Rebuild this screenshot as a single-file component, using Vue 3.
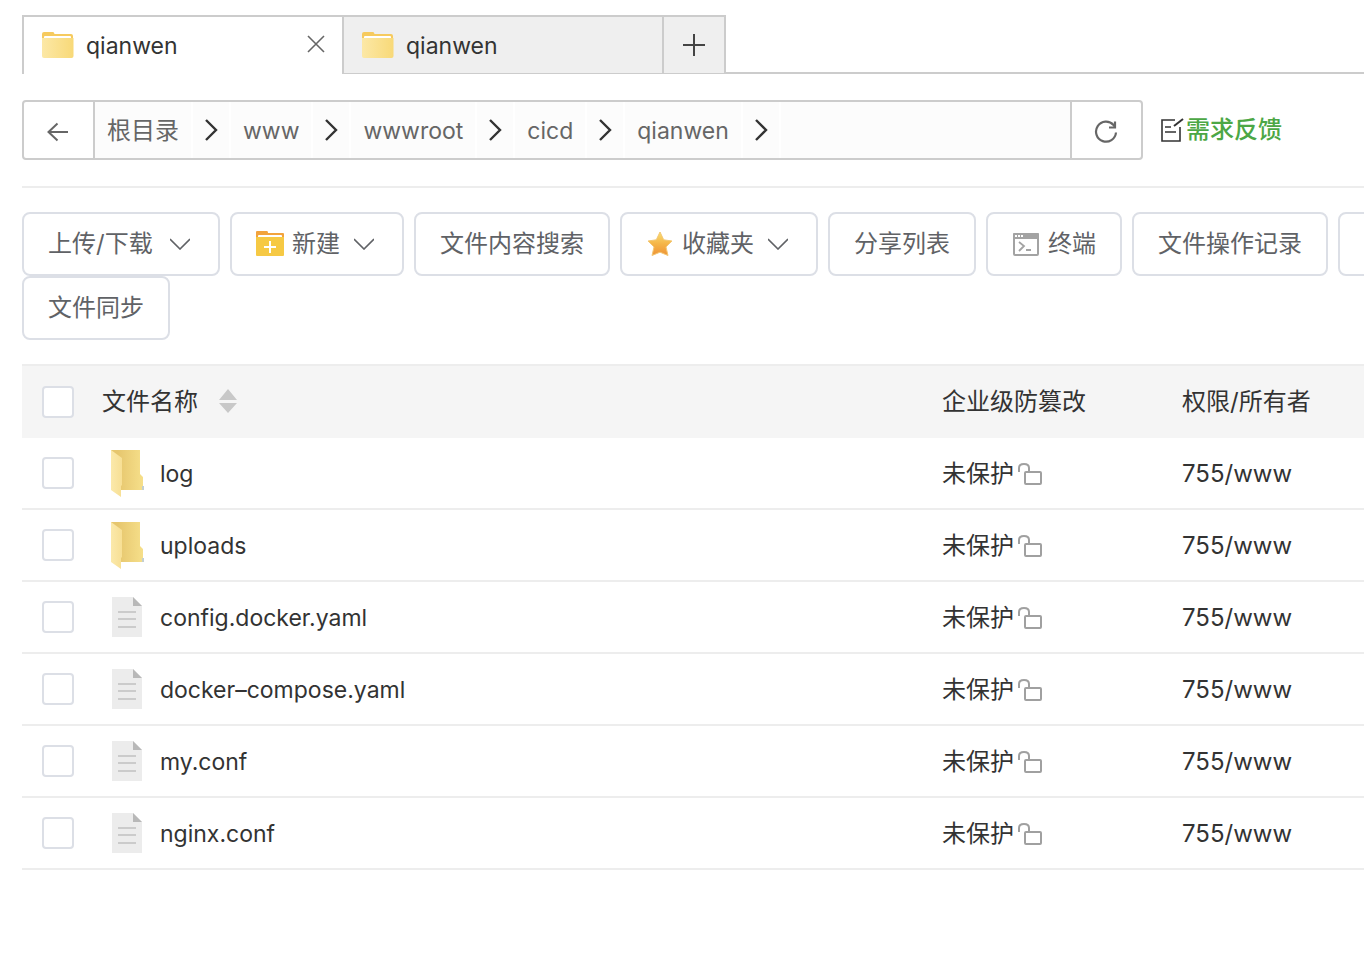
<script setup>
import { ref } from 'vue';

const tabs = ref(['qianwen', 'qianwen']);
const activeTab = ref(0);
const crumbs = ['根目录', 'www', 'wwwroot', 'cicd', 'qianwen'];

const files = ref([
  { name: 'log', type: 'folder', checked: false },
  { name: 'uploads', type: 'folder', checked: false },
  { name: 'config.docker.yaml', type: 'file', checked: false },
  { name: 'docker–compose.yaml', type: 'file', checked: false },
  { name: 'my.conf', type: 'file', checked: false },
  { name: 'nginx.conf', type: 'file', checked: false },
]);

const toolbar = [
  { text: '上传/下载', arrow: true, wide: true },
  { text: '新建', icon: 'new', arrow: true },
  { text: '文件内容搜索' },
  { text: '收藏夹', icon: 'star', arrow: true },
  { text: '分享列表' },
  { text: '终端', icon: 'terminal' },
  { text: '文件操作记录' },
];

const allChecked = ref(false);
const toggleAll = () => {
  files.value.forEach((file) => (file.checked = allChecked.value));
};
</script>

<template>
  <main class="file-manager">
    <svg class="defs" width="0" height="0" aria-hidden="true">
      <defs>
        <linearGradient id="tab-folder">
          <stop offset="0" stop-color="#fce8a6" />
          <stop offset="1" stop-color="#f8d978" />
        </linearGradient>
        <linearGradient id="folder-back">
          <stop offset="0.2" stop-color="#e6c66e" />
          <stop offset="1" stop-color="#f6df8a" />
        </linearGradient>
        <linearGradient id="folder-front">
          <stop offset="0" stop-color="#fbe9ab" />
          <stop offset="1" stop-color="#f7df94" />
        </linearGradient>
        <linearGradient id="star-fill" x1="0" y1="0" x2="0" y2="1">
          <stop offset="0" stop-color="#f9df72" />
          <stop offset="0.5" stop-color="#f5b548" />
          <stop offset="1" stop-color="#ee9336" />
        </linearGradient>
      </defs>
    </svg>

    <nav class="tabs">
      <div
        v-for="(tab, index) in tabs"
        :key="index"
        :class="['tab', { 'tab--active': index === activeTab }]">
        <button class="tab__name" @click="activeTab = index">
          <svg width="32" height="28" viewBox="0 0 32 28">
            <path d="M0 8V3q0-2 2-2h9q1 0 1.500 2H29q2 0 2 2v5H0z" fill="#f6ca5e" />
            <path d="M2 6q0-1 1-1h25q1 0 1 1v2H2z" fill="#fff" />
            <path d="M0 7h31.500v18q0 2-2 2H2q-2 0-2-2z" fill="url(#tab-folder)" />
          </svg>
          <span>{{ tab }}</span>
        </button>
        <button v-if="index === activeTab" class="tab__close" aria-label="关闭">
          <svg width="18" height="18" viewBox="0 0 18 18">
            <path d="M1 1l16 16M17 1L1 17" fill="none" stroke="#666" stroke-width="1.600" />
          </svg>
        </button>
      </div>
      <button class="tabs__add" aria-label="新标签">
        <svg width="24" height="24" viewBox="0 0 24 24">
          <path d="M12 1v22M1 12h22" fill="none" stroke="#444" stroke-width="2" />
        </svg>
      </button>
    </nav>

    <div class="location">
      <div class="path">
        <button class="path__button path__button--back" aria-label="返回">
          <svg width="22" height="20" viewBox="0 0 22 20">
            <path d="M10.500 1.500L1.500 10l9 8.500M1.500 10H21" fill="none" stroke="#666" stroke-width="2" />
          </svg>
        </button>
        <div class="path__crumbs">
          <template v-for="crumb in crumbs" :key="crumb">
            <a class="crumb" href="#">{{ crumb }}</a>
            <span class="crumb__next">
              <svg width="14" height="22" viewBox="0 0 14 22">
                <path d="M2 1l10 10L2 21" fill="none" stroke="#333" stroke-width="2.400" />
              </svg>
            </span>
          </template>
        </div>
        <button class="path__button path__button--refresh" aria-label="刷新">
          <svg width="24" height="24" viewBox="0 0 24 24">
            <path d="M22 12.500A10 10 0 1 1 19.500 5l1 1.500" fill="none" stroke="#666" stroke-width="2.200" />
            <path d="M21 1.500v6h-6" fill="none" stroke="#666" stroke-width="2.200" />
          </svg>
        </button>
      </div>
      <a class="feedback" href="#">
        <svg width="26" height="28" viewBox="0 0 26 28">
          <path d="M16 4H3v21h18V11" fill="none" stroke="#333" stroke-width="1.600" />
          <path d="M6 11h6M6 16h11" fill="none" stroke="#333" stroke-width="1.600" />
          <path d="M15 10l9-7" fill="none" stroke="#333" stroke-width="2" />
        </svg>
        <span>需求反馈</span>
      </a>
    </div>

    <div class="toolbar">
      <div class="toolbar__row">
        <button v-for="item in toolbar" :key="item.text" :class="['tool', { 'tool--wide': item.wide }]">
          <svg v-if="item.icon === 'new'" class="tool__icon" width="28" height="28" viewBox="0 0 28 28">
            <path d="M0 8V2q0-1 1-1h10q1 0 1 2h15q1 0 1 1v5H0z" fill="#f2a33c" />
            <path d="M2 6q0-1 1-1h22q1 0 1 1v2H2z" fill="#fff" />
            <path d="M0 7h28v18q0 1-1 1H1q-1 0-1-1z" fill="#f6c944" />
            <path d="M14 11v12M8 17h12" fill="none" stroke="#fff" stroke-width="2" />
          </svg>
          <svg v-else-if="item.icon === 'star'" class="tool__icon" width="28" height="28" viewBox="0 0 28 28">
            <path
              d="M14 2l3.700 7.800 8.300 1.200-6 6 2 8.500-8-3.300-8 3.300L8 17l-6-6 8.300-1.200z"
              fill="url(#star-fill)"
              stroke="#f3c774"
              stroke-width="1"
              stroke-linejoin="round" />
          </svg>
          <svg
            v-else-if="item.icon === 'terminal'"
            class="tool__icon"
            width="28"
            height="28"
            viewBox="0 0 28 28">
            <rect x="2" y="4" width="24" height="21" rx="1" fill="#fff" stroke="#a3a3a3" stroke-width="2" />
            <path d="M1 4q0-1 1-1h24q1 0 1 1v5H1z" fill="#a3a3a3" />
            <path d="M3 6h2m1 0h2m1 0h2" stroke="#fff" stroke-width="2" />
            <path d="M7 12l5 4-5 5M14 20h5" fill="none" stroke="#a3a3a3" stroke-width="1.800" />
          </svg>
          <span>{{ item.text }}</span>
          <svg v-if="item.arrow" class="tool__arrow" width="20" height="12" viewBox="0 0 20 12">
            <path d="M0 1l10 10L20 1" fill="none" stroke="#606266" stroke-width="1.600" />
          </svg>
        </button>
        <button class="tool tool--more" aria-label="更多"></button>
      </div>
      <div class="toolbar__row">
        <button class="tool">文件同步</button>
      </div>
    </div>

    <table class="files">
      <colgroup>
        <col class="files__check" />
        <col />
        <col class="files__protect" />
        <col class="files__owner" />
      </colgroup>
      <thead>
        <tr>
          <th>
            <input v-model="allChecked" type="checkbox" aria-label="全选" @change="toggleAll" />
          </th>
          <th>
            <div class="cell">
              <span>文件名称</span>
              <svg class="sort" width="18" height="26" viewBox="0 0 18 26">
                <path d="M9 0l9 11H0zM9 24l9-10H0z" fill="#c8c8c8" />
              </svg>
            </div>
          </th>
          <th>企业级防篡改</th>
          <th>权限/所有者</th>
        </tr>
      </thead>
      <tbody>
        <tr v-for="file in files" :key="file.name">
          <td>
            <input v-model="file.checked" type="checkbox" :aria-label="file.name" />
          </td>
          <td>
            <div class="cell">
              <svg v-if="file.type === 'folder'" class="file-icon" width="50" height="48" viewBox="0 0 50 48">
                <path d="M9 1h29v24l3 3v13H9z" fill="url(#folder-back)" />
                <path d="M40 37h2v4h-2z" fill="#c3cfd0" />
                <path d="M9 1l11 8v27l-1 1v11L9 41z" fill="url(#folder-front)" />
              </svg>
              <svg v-else class="file-icon" width="50" height="48" viewBox="0 0 50 48">
                <path d="M10 4h21l9 9v31H10z" fill="#ececec" />
                <path d="M31 4l9 9h-9z" fill="#b8b8b8" />
                <path d="M16 19h18M16 26h18M16 34h18" fill="none" stroke="#cbcbcb" stroke-width="2" />
              </svg>
              <span class="file-name">{{ file.name }}</span>
            </div>
          </td>
          <td>
            <div class="cell">
              <span class="protect">未保护</span>
              <svg width="28" height="26" viewBox="0 0 28 26">
                <rect x="10" y="12" width="16" height="12" rx="1" fill="none" stroke="#a0a0a0" stroke-width="2" />
                <path d="M4 12V8q0-4 5-4t5 4v4" fill="none" stroke="#a0a0a0" stroke-width="2" />
              </svg>
            </div>
          </td>
          <td class="owner">755/www</td>
        </tr>
      </tbody>
    </table>
  </main>
</template>

<style>
body {
  background: #fff;
}
</style>

<style scoped>
.file-manager {
  padding: 15px 0 24px 22px;
  overflow: hidden;
  font-family: Inter, 'Noto Sans CJK SC', sans-serif;
  font-size: 24px;
  line-height: 32px;
  color: #333;
}

.file-manager * {
  box-sizing: border-box;
}

.defs {
  position: absolute;
}

svg {
  display: block;
  flex: none;
}

button {
  padding: 0;
  border: none;
  background: none;
  color: inherit;
  font: inherit;
  cursor: pointer;
}

a {
  text-decoration: none;
}

.tabs {
  display: flex;
  height: 59px;
}

.tabs::after {
  content: '';
  flex: 1;
  border-bottom: 2px solid #ccc;
}

.tab {
  display: flex;
  align-items: center;
  width: 320px;
  padding: 0 16px 0 18px;
  border: solid #ccc;
  border-width: 2px 0 1px 2px;
  background: #efefef;
}

.tab--active {
  padding-bottom: 1px;
  border-bottom: none;
  background: #fff;
}

.tab__name {
  display: flex;
  flex: 1;
  align-items: center;
  gap: 12px;
  font-size: 23px;
}

.tab__name span {
  padding-top: 2px;
}

.tab__close {
  padding: 0 1px 2px;
}

.tabs__add {
  display: flex;
  align-items: center;
  justify-content: center;
  width: 64px;
  border: solid #ccc;
  border-width: 2px 2px 1px;
  background: #efefef;
}

.location {
  display: flex;
  align-items: center;
  gap: 16px;
  padding: 26px 0;
  border-bottom: 2px solid #ededed;
}

.path {
  display: flex;
  width: 1121px;
  height: 60px;
}

.path__button {
  display: flex;
  align-items: center;
  justify-content: center;
  width: 73px;
  padding: 4px 1px 0 0;
  border: 2px solid #ccc;
}

.path__button--back {
  border-radius: 4px 0 0 4px;
}

.path__button--refresh {
  border-radius: 0 4px 4px 0;
}

.path__crumbs {
  display: flex;
  flex: 1;
  border: solid #ccc;
  border-width: 2px 0;
  background: #fcfcfc;
}

.crumb,
.crumb__next {
  display: flex;
  align-items: center;
  border-right: 2px solid #fff;
}

.crumb {
  padding: 2px 12px 0;
  color: #666;
  font-size: 23px;
}

.crumb:first-child {
  font-size: 24px;
}

.crumb__next {
  justify-content: center;
  width: 38px;
}

.feedback {
  display: flex;
  align-items: center;
  gap: 1px;
  color: #4ca745;
  font-weight: 500;
}

.toolbar {
  padding: 24px 0;
}

.toolbar__row {
  display: flex;
  gap: 10px;
}

.tool {
  display: flex;
  flex: none;
  align-items: center;
  height: 64px;
  padding: 0 24px;
  border: 2px solid #dcdfe6;
  border-radius: 8px;
  color: #606266;
}

.tool--wide {
  min-width: 198px;
}

.tool--wide .tool__arrow {
  margin-left: auto;
}

.tool--more {
  width: 148px;
}

.tool__icon {
  margin-right: 8px;
}

.tool__arrow {
  margin: 0 4px 0 14px;
}

.files {
  width: 100%;
  border-collapse: separate;
  border-spacing: 0;
  table-layout: fixed;
}

.files__check {
  width: 60px;
}

.files__protect {
  width: 240px;
}

.files__owner {
  width: 202px;
}

th,
td {
  height: 72px;
  padding: 0 20px;
  border-bottom: 2px solid #ededed;
  font-weight: 400;
  text-align: left;
  white-space: nowrap;
}

th {
  height: 74px;
  border-top: 2px solid #ededed;
  border-bottom: none;
  background: #f5f5f5;
}

th:first-child,
td:first-child {
  padding-right: 0;
}

input {
  display: block;
  appearance: none;
  width: 32px;
  height: 32px;
  margin: 0;
  border: 2px solid #dcdfe6;
  border-radius: 4px;
  background: #fff;
}

input:checked {
  background: #20a53a;
}

.cell {
  display: flex;
  align-items: center;
}

.sort {
  margin-left: 21px;
}

.file-icon {
  margin-right: 8px;
}

.file-name {
  padding-top: 2px;
  font-size: 23px;
}

.protect {
  padding: 2px 1px 0 0;
}

.owner {
  padding-top: 2px;
}
</style>
